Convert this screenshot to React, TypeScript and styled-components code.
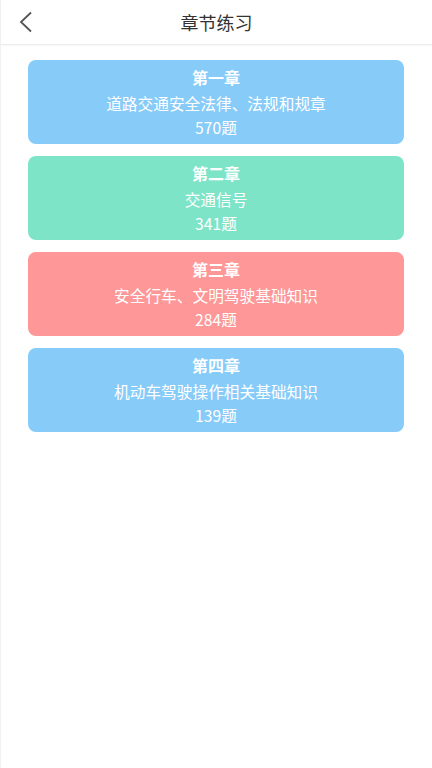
import styled, { createGlobalStyle } from 'styled-components';

const GlobalStyle = createGlobalStyle`
   html, body {
      margin: 0;
      padding: 0;
      background: #ffffff;
      font-family: "Noto Sans CJK SC", "Noto Sans", sans-serif;
   }
`;

const chapters = [
   { title: '第一章', desc: '道路交通安全法律、法规和规章', count: 570, color: '#87cbf9' },
   { title: '第二章', desc: '交通信号', count: 341, color: '#7ee4c8' },
   { title: '第三章', desc: '安全行车、文明驾驶基础知识', count: 284, color: '#fe9797' },
   { title: '第四章', desc: '机动车驾驶操作相关基础知识', count: 139, color: '#87cbf9' },
];

function App() {
   return (
      <Page>
         <GlobalStyle />
         <Header>
            <BackButton>
               <svg width="16" height="22" viewBox="0 0 16 22">
                  <polyline points="13,1.5 3,11 13,20.5" fill="none" stroke="#555" strokeWidth="1.8" />
               </svg>
            </BackButton>
            <Title>章节练习</Title>
         </Header>
         <List>
            {chapters.map((c) => (
               <Card key={c.title} color={c.color}>
                  <CardTitle>{c.title}</CardTitle>
                  <CardText>{c.desc}</CardText>
                  <CardText>{c.count}题</CardText>
               </Card>
            ))}
         </List>
      </Page>
   );
}

export default App;

const Page = styled.div`
   width: 432px;
   min-height: 768px;
   background: #ffffff;
   border-left: 1px solid #f2f2f2;
   box-sizing: border-box;
`;
const Header = styled.div`
   height: 44px;
   display: flex;
   align-items: center;
   justify-content: center;
   position: relative;
   border-bottom: 1px solid #ececec;
   box-shadow: 0 1px 2px rgba(0, 0, 0, 0.04);
`;
const BackButton = styled.div`
   position: absolute;
   left: 17px;
   top: 11px;
   display: flex;
`;
const Title = styled.div`
   font-size: 18px;
   color: #333;
`;
const List = styled.div`
   display: flex;
   flex-direction: column;
   gap: 12px;
   padding: 15px 28px 0 27px;
`;
const Card = styled.div<{ color: string }>`
   height: 84px;
   border-radius: 8px;
   background: ${(p) => p.color};
   display: flex;
   flex-direction: column;
   align-items: center;
   justify-content: center;
   color: #ffffff;
`;
const CardTitle = styled.div`
   font-size: 16px;
   font-weight: bold;
   line-height: 26px;
   margin-bottom: 2px;
`;
const CardText = styled.div`
   font-size: 15.7px;
   line-height: 24px;
`;
